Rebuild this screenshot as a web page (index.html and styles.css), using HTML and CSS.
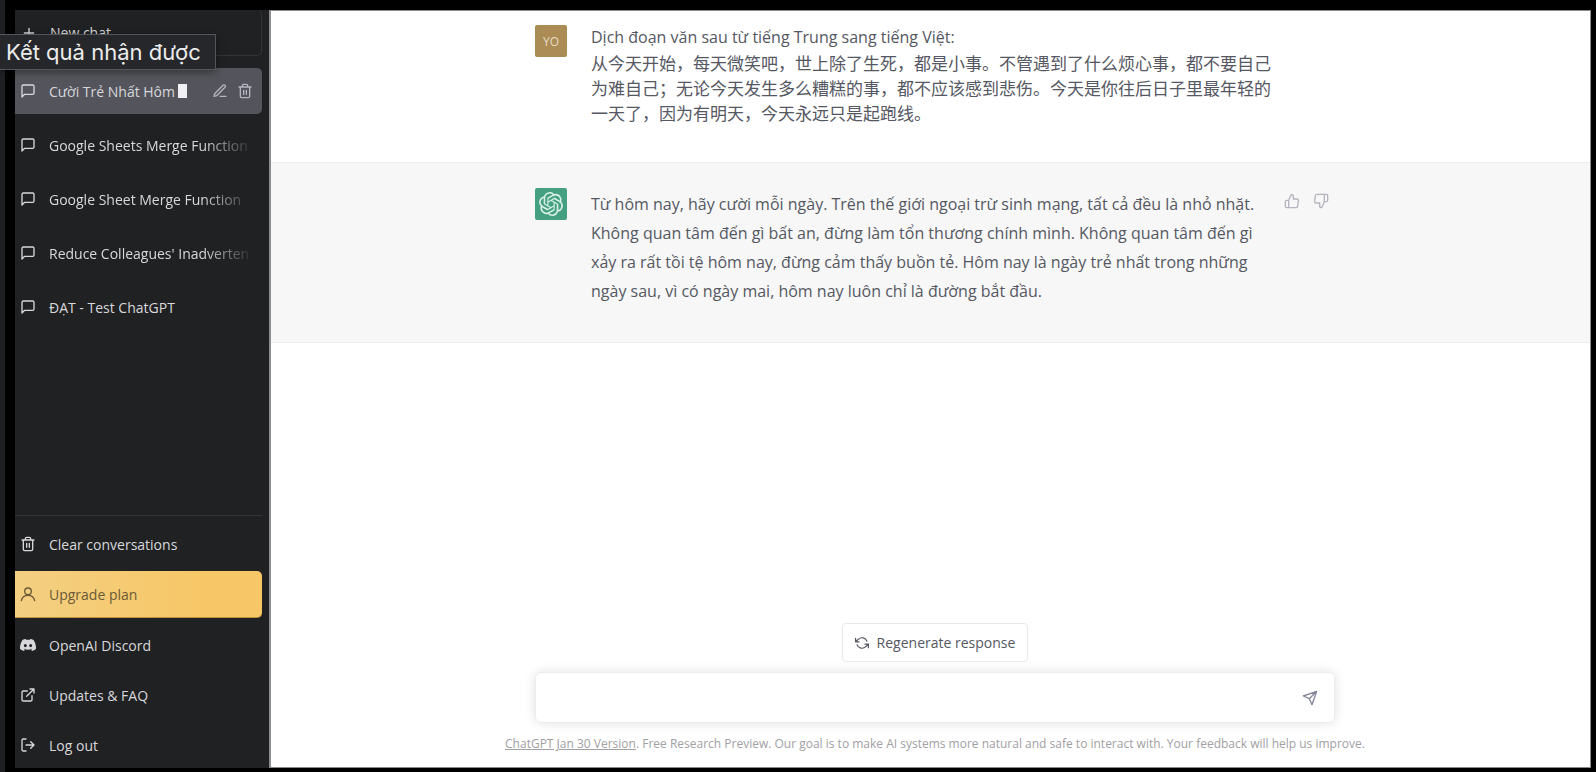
FILE: index.html
```html
<!DOCTYPE html>
<html lang="vi">
<head>
  <meta charset="UTF-8">
  <meta name="viewport" content="width=device-width, initial-scale=1.0">
  <title>ChatGPT</title>
  <link rel="stylesheet" href="styles.css">
</head>
<body>
  <!-- Shared icons -->
  <svg class="sprite" aria-hidden="true">
    <symbol id="icon-chat" viewBox="0 0 24 24"><path d="M21 15a2 2 0 0 1-2 2H7l-4 4V5a2 2 0 0 1 2-2h14a2 2 0 0 1 2 2z"/></symbol>
    <symbol id="icon-trash" viewBox="0 0 24 24"><path d="M3 6h18M19 6v14a2 2 0 0 1-2 2H7a2 2 0 0 1-2-2V6m3 0V4a2 2 0 0 1 2-2h4a2 2 0 0 1 2 2v2M10 11v6M14 11v6"/></symbol>
    <symbol id="icon-thumb" viewBox="0 0 24 24"><path d="M14 9V5a3 3 0 0 0-3-3l-4 9v11h11.28a2 2 0 0 0 2-1.7l1.38-9a2 2 0 0 0-2-2.3zM7 22H4a2 2 0 0 1-2-2v-7a2 2 0 0 1 2-2h3"/></symbol>
  </svg>

  <div class="tooltip" role="tooltip">Kết quả nhận được</div>

  <div class="app">
    <!-- Sidebar -->
    <nav class="sidebar">
      <button class="new-chat" type="button">
        <svg class="icon" viewBox="0 0 24 24"><path d="M12 5v14M5 12h14"/></svg>
        <span>New chat</span>
      </button>

      <div class="history">
        <div class="row active">
          <svg class="icon"><use href="#icon-chat"/></svg>
          <a class="title" href="#">Cười Trẻ Nhất Hôm<span class="caret"></span></a>
          <button class="icon-button" type="button" aria-label="Edit">
            <svg class="icon" viewBox="0 0 24 24"><path d="M12 20h9M16.5 3.5a2.12 2.12 0 0 1 3 3L7 19l-4 1 1-4z"/></svg>
          </button>
          <button class="icon-button" type="button" aria-label="Delete">
            <svg class="icon"><use href="#icon-trash"/></svg>
          </button>
        </div>
        <a class="row" href="#"><svg class="icon"><use href="#icon-chat"/></svg><span class="title fade">Google Sheets Merge Function</span></a>
        <a class="row" href="#"><svg class="icon"><use href="#icon-chat"/></svg><span class="title fade">Google Sheet Merge Function</span></a>
        <a class="row" href="#"><svg class="icon"><use href="#icon-chat"/></svg><span class="title fade">Reduce Colleagues' Inadverten</span></a>
        <a class="row" href="#"><svg class="icon"><use href="#icon-chat"/></svg><span class="title">ĐẠT - Test ChatGPT</span></a>
      </div>

      <div class="links">
        <a class="row" href="#"><svg class="icon"><use href="#icon-trash"/></svg><span>Clear conversations</span></a>
        <a class="row upgrade" href="#">
          <svg class="icon" viewBox="0 0 24 24"><path d="M2 22c1-5 4-8 10-8s9 3 10 8"/><circle cx="12" cy="8" r="5"/></svg>
          <span>Upgrade plan</span>
        </a>
        <a class="row" href="#">
          <svg class="icon solid" viewBox="0 0 24 24"><path fill-rule="evenodd" d="M20.3 4.4A19.8 19.8 0 0 0 15.4 3l-.6 1.3a18 18 0 0 0-5.6 0L8.600 3a19.700 19.700 0 0 0-4.900 1.400C.6 9-.3 13.600.1 18.100a20 20 0 0 0 6 3l1.300-2.100-1.900-.9.500-.4a14.200 14.200 0 0 0 12 0l.5.4-1.900.9 1.300 2.100a20 20 0 0 0 6-3c.5-5.200-.8-9.700-3.600-13.700zM8 15.300c-1.200 0-2.200-1.100-2.200-2.400S6.800 10.500 8 10.500s2.200 1.100 2.200 2.400S9.200 15.300 8 15.300zm8 0c-1.200 0-2.200-1.100-2.200-2.400s1-2.400 2.200-2.400 2.200 1.100 2.200 2.400-1 2.400-2.200 2.400z"/></svg>
          <span>OpenAI Discord</span>
        </a>
        <a class="row" href="#">
          <svg class="icon" viewBox="0 0 24 24"><path d="M18 13v6a2 2 0 0 1-2 2H5a2 2 0 0 1-2-2V8a2 2 0 0 1 2-2h6M15 3h6v6M10 14L21 3"/></svg>
          <span>Updates &amp; FAQ</span>
        </a>
        <a class="row" href="#">
          <svg class="icon" viewBox="0 0 24 24"><path d="M9 21H5a2 2 0 0 1-2-2V5a2 2 0 0 1 2-2h4M16 17l5-5-5-5M21 12H9"/></svg>
          <span>Log out</span>
        </a>
      </div>
    </nav>

    <!-- Conversation -->
    <main class="chat">
      <section class="message user">
        <div class="column">
          <div class="avatar">YO</div>
          <div class="text">
            <p>Dịch đoạn văn sau từ tiếng Trung sang tiếng Việt:</p>
            <p lang="zh">从今天开始，每天微笑吧，世上除了生死，都是小事。不管遇到了什么烦心事，都不要自己<br>为难自己；无论今天发生多么糟糕的事，都不应该感到悲伤。今天是你往后日子里最年轻的<br>一天了，因为有明天，今天永远只是起跑线。</p>
          </div>
        </div>
      </section>

      <section class="message reply">
        <div class="column">
          <div class="avatar">
            <svg class="logo" viewBox="0 0 24 24"><path d="M22.282 9.821a5.985 5.985 0 0 0-.516-4.910 6.046 6.046 0 0 0-6.510-2.900A6.065 6.065 0 0 0 4.981 4.182a5.985 5.985 0 0 0-3.998 2.900 6.046 6.046 0 0 0 .743 7.097 5.980 5.980 0 0 0 .511 4.911 6.051 6.051 0 0 0 6.515 2.900A5.985 5.985 0 0 0 13.260 24a6.056 6.056 0 0 0 5.772-4.206 5.990 5.990 0 0 0 3.998-2.900 6.056 6.056 0 0 0-.747-7.073zM13.260 22.430a4.476 4.476 0 0 1-2.876-1.041l.141-.080 4.779-2.758a.795.795 0 0 0 .392-.681v-6.737l2.020 1.169a.071.071 0 0 1 .038.052v5.583a4.504 4.504 0 0 1-4.494 4.493zM3.600 18.304a4.471 4.471 0 0 1-.535-3.014l.142.085 4.783 2.759a.771.771 0 0 0 .781 0l5.843-3.369v2.332a.080.080 0 0 1-.033.062L9.740 19.950a4.500 4.500 0 0 1-6.140-1.646zM2.340 7.896a4.485 4.485 0 0 1 2.366-1.973V11.600a.766.766 0 0 0 .388.677l5.815 3.355-2.020 1.168a.076.076 0 0 1-.071 0l-4.830-2.787A4.504 4.504 0 0 1 2.340 7.872zm16.597 3.855l-5.833-3.387L15.119 7.200a.076.076 0 0 1 .071 0l4.830 2.791a4.494 4.494 0 0 1-.676 8.105v-5.678a.790.790 0 0 0-.407-.667zm2.010-3.023l-.141-.085-4.774-2.782a.776.776 0 0 0-.785 0L9.409 9.230V6.897a.066.066 0 0 1 .028-.061l4.830-2.787a4.500 4.500 0 0 1 6.680 4.660zm-12.640 4.135l-2.020-1.164a.080.080 0 0 1-.038-.057V6.075a4.500 4.500 0 0 1 7.375-3.453l-.142.080L8.704 5.460a.795.795 0 0 0-.393.681zm1.097-2.365l2.602-1.500 2.607 1.500v2.999l-2.597 1.500-2.607-1.500z"/></svg>
          </div>
          <div class="text">
            <p>Từ hôm nay, hãy cười mỗi ngày. Trên thế giới ngoại trừ sinh mạng, tất cả đều là nhỏ nhặt.<br>Không quan tâm đến gì bất an, đừng làm tổn thương chính mình. Không quan tâm đến gì<br>xảy ra rất tồi tệ hôm nay, đừng cảm thấy buồn tẻ. Hôm nay là ngày trẻ nhất trong những<br>ngày sau, vì có ngày mai, hôm nay luôn chỉ là đường bắt đầu.</p>
          </div>
          <div class="feedback">
            <button class="icon-button" type="button" aria-label="Good response"><svg class="icon"><use href="#icon-thumb"/></svg></button>
            <button class="icon-button" type="button" aria-label="Bad response"><svg class="icon flip"><use href="#icon-thumb"/></svg></button>
          </div>
        </div>
      </section>

      <form class="composer">
        <button class="regenerate" type="button">
          <svg class="icon" viewBox="0 0 24 24"><path d="M1 4v6h6M23 20v-6h-6M20.490 9A9 9 0 0 0 5.640 5.640L1 10m22 4l-4.640 4.360A9 9 0 0 1 3.510 15"/></svg>
          <span>Regenerate response</span>
        </button>
        <div class="prompt">
          <input type="text" aria-label="Message">
          <button class="icon-button" type="submit" aria-label="Send">
            <svg class="icon" viewBox="0 0 24 24"><path d="M22 2L15 22l-4-9-9-4zM22 2L11 13"/></svg>
          </button>
        </div>
        <p class="notice"><a href="#">ChatGPT Jan 30 Version</a>. Free Research Preview. Our goal is to make AI systems more natural and safe to interact with. Your feedback will help us improve.</p>
      </form>
    </main>
  </div>
</body>
</html>
```

FILE: styles.css
```css
* {
  box-sizing: border-box;
}
body {
  margin: 0;
  background: #000;
  font-family: "Open Sans", "Noto Sans", sans-serif;
  font-size: 14px;
}
p {
  margin: 0;
}
a {
  color: inherit;
  text-decoration: none;
}
button {
  font: inherit;
  color: inherit;
  background: none;
  border: none;
  padding: 0;
  cursor: pointer;
}
.sprite {
  display: none;
}
.icon {
  flex: none;
  display: block;
  width: 16px;
  height: 16px;
  fill: none;
  stroke: currentColor;
  stroke-width: 2;
  stroke-linecap: round;
  stroke-linejoin: round;
}
.solid {
  fill: currentColor;
  stroke: none;
}
.flip {
  transform: rotate(180deg);
}

.tooltip {
  position: absolute;
  top: 34px;
  left: 0;
  z-index: 1;
  padding: 0 14px 0 6px;
  border: 1px solid #55565a;
  border-left: none;
  background: #26272a;
  box-shadow: 0 2px 8px rgba(0, 0, 0, 0.4);
  color: #ececec;
  font-family: Inter, sans-serif;
  font-size: 22px;
  line-height: 34px;
  white-space: nowrap;
}

.app {
  display: flex;
  min-height: 100vh;
  padding: 10px 5px 4px 10px;
  border-left: 5px solid #1f2023;
}

/* Sidebar */
.sidebar {
  flex: none;
  display: flex;
  flex-direction: column;
  width: 254px;
  padding-right: 7px;
  background: #202123;
  color: #d8d8dc;
}
.new-chat {
  display: flex;
  align-items: center;
  gap: 13px;
  height: 46px;
  padding-left: 6px;
  border: 1px solid #34353a;
  border-width: 0 1px 1px 0;
  border-radius: 0 5px 5px 0;
}
.history {
  flex: 1;
  display: flex;
  flex-direction: column;
  gap: 8px;
  padding-top: 12px;
}
.row {
  display: flex;
  align-items: center;
  gap: 13px;
  height: 46px;
  padding-left: 5px;
  white-space: nowrap;
}
.active {
  gap: 9px;
  padding-right: 9px;
  border-radius: 0 5px 5px 0;
  background: #54555c;
}
.active .icon-button {
  color: #b4b5c0;
}
.title {
  flex: 1;
  display: flex;
  align-items: center;
  gap: 3px;
  overflow: hidden;
}
.active .title {
  padding-left: 4px;
}
.fade {
  margin-right: 8px;
  mask-image: linear-gradient(to right, #000 75%, transparent);
}
.caret {
  width: 9px;
  height: 14px;
  background: #f0f0f4;
}
.links {
  display: flex;
  flex-direction: column;
  gap: 4px;
  padding-top: 5px;
  border-top: 1px solid #343538;
}
.links .upgrade {
  height: 47px;
  border-radius: 0 5px 5px 0;
  border-bottom: 1px solid #c2913c;
  background: linear-gradient(to right, #f3cf82, #f7c767 75%);
  color: #6b5a36;
}

/* Conversation */
.chat {
  flex: 1;
  display: flex;
  flex-direction: column;
  min-width: 0;
  border: 1px solid #8a8a8a;
  border-left: 2px solid #8e8e90;
  background: #fff;
  color: #555762;
}
.message {
  padding-left: 9px;
  border-bottom: 1px solid #ececec;
}
.column {
  display: flex;
  gap: 24px;
  width: 800px;
  max-width: 100%;
  margin: 0 auto;
}
.avatar {
  flex: none;
  display: flex;
  align-items: center;
  justify-content: center;
  width: 32px;
  height: 32px;
  border-radius: 2px;
  color: #e6dcc4;
  font-size: 12px;
}
.text {
  flex: 1;
  font-size: 16px;
  white-space: nowrap;
}
.user {
  padding-top: 14px;
  padding-bottom: 37px;
}
.user .avatar {
  background: #ab8c54;
}
.user .text {
  line-height: 25px;
}
.text [lang="zh"] {
  font-family: "Noto Sans CJK SC", sans-serif;
  font-size: 17px;
}
.reply {
  padding-top: 25px;
  padding-bottom: 36px;
  background: #f7f7f7;
}
.reply .avatar {
  background: #45a081;
}
.reply .text {
  padding-top: 2px;
  line-height: 29px;
}
.logo {
  width: 24px;
  height: 24px;
  fill: #d9f0e6;
}
.feedback {
  display: flex;
  align-items: flex-start;
  gap: 13px;
  padding: 5px 6px 0 0;
  color: #b4b5c0;
}

/* Composer */
.composer {
  display: flex;
  flex-direction: column;
  align-items: center;
  margin-top: auto;
  padding: 0 0 12px 9px;
}
.regenerate {
  display: flex;
  align-items: center;
  gap: 8px;
  height: 39px;
  padding: 0 12px;
  border: 1px solid #e8e8ea;
  border-radius: 4px;
  background: #fff;
}
.regenerate .icon {
  width: 14px;
  height: 14px;
}
.prompt {
  display: flex;
  align-items: center;
  width: 800px;
  max-width: 100%;
  height: 51px;
  margin: 10px 0;
  padding: 0 16px 0 12px;
  border: 1px solid #ececec;
  border-radius: 6px;
  box-shadow: 0 0 12px rgba(0, 0, 0, 0.12);
}
.prompt input {
  flex: 1;
  height: 30px;
  border: none;
  outline: none;
  background: none;
  font: inherit;
}
.prompt .icon-button {
  color: #85869a;
}
.notice {
  color: #a0a0a4;
  font-size: 12px;
  line-height: 22px;
}
.notice a {
  text-decoration: underline;
}
```
